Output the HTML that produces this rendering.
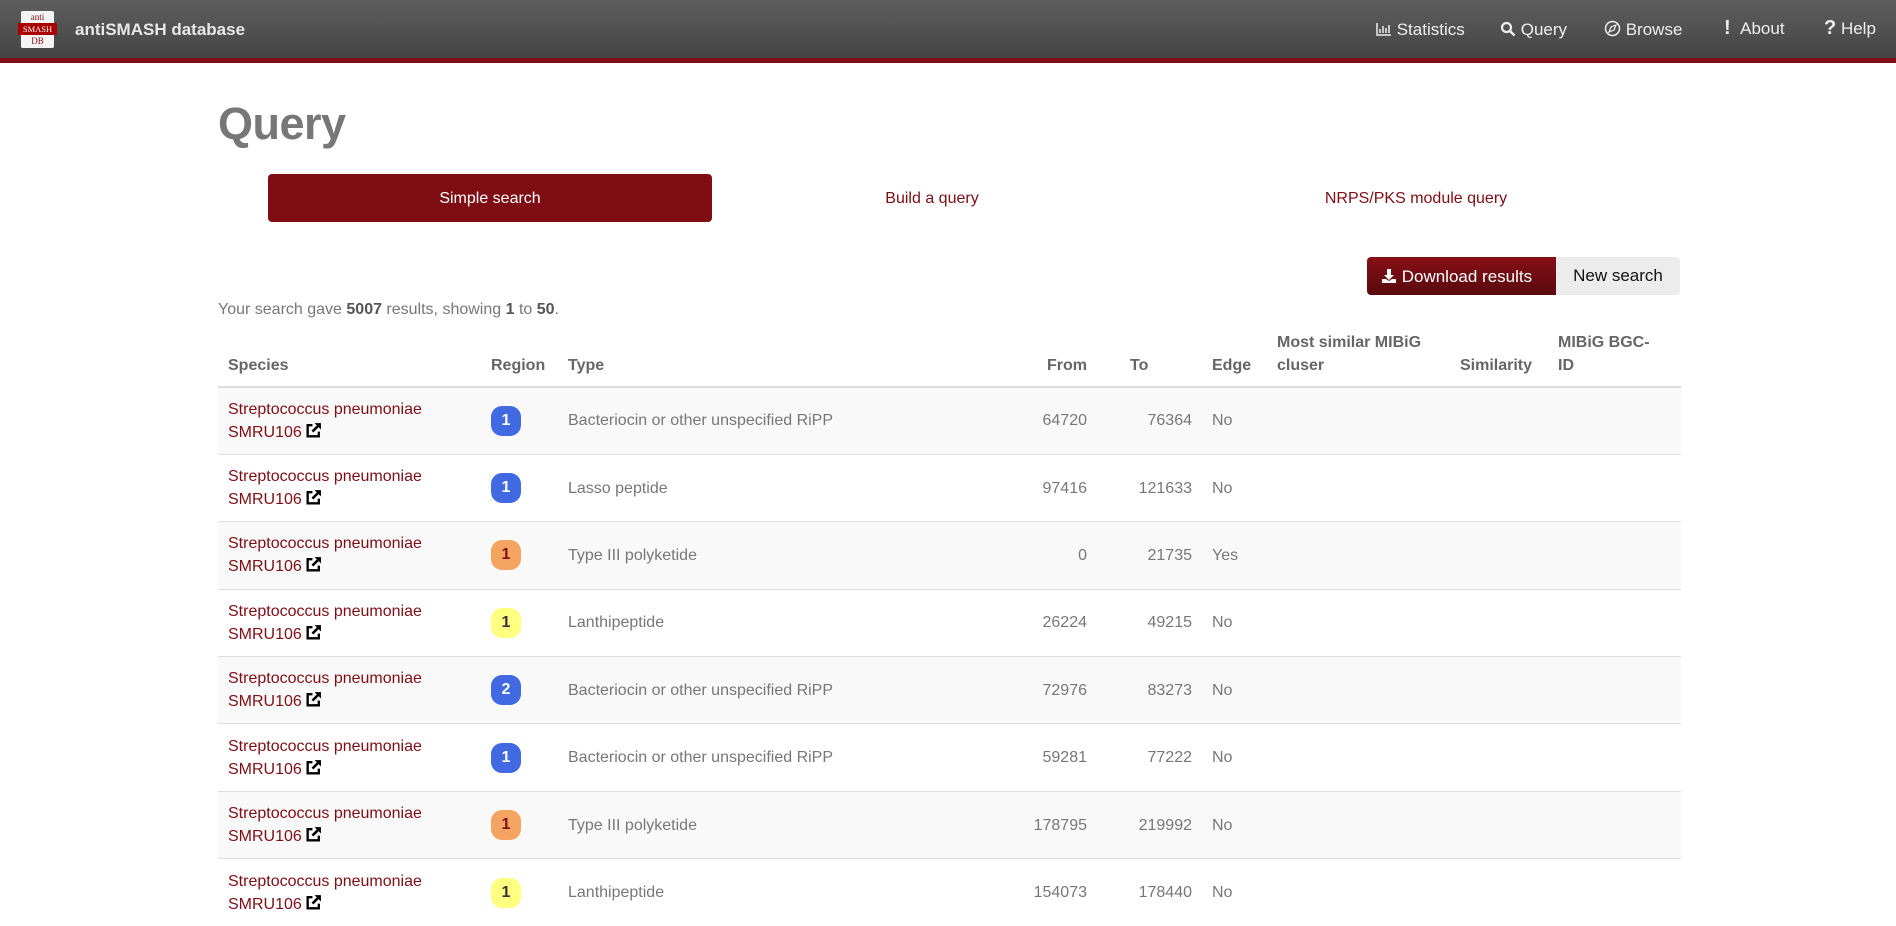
<!DOCTYPE html>
<html><head><meta charset="utf-8"><style>
*{box-sizing:border-box;margin:0;padding:0}
body{width:1896px;height:889px;overflow:hidden;background:#fff;font-family:"Liberation Sans",Arial,sans-serif;color:#777;position:relative}
.nav{position:absolute;left:0;top:0;width:1896px;height:63px;background:linear-gradient(#5e5e5e,#444);border-bottom:5px solid #7f0e14}
.logo{position:absolute;left:21px;top:11px;width:33px;height:37px;background:#f4f4f4;border-radius:2px;font-family:"Liberation Serif",serif;font-size:9px;color:#7f0e14;text-align:center;line-height:12px}
.logo .m{background:#a00;color:#fff;margin:0 -3px;font-size:8.5px}
.brand{position:absolute;left:75px;top:20px;color:#e8e8e8;font-weight:bold;font-size:17px}
.ni{position:absolute;top:20px;color:#eee;font-size:17px}
h1{position:absolute;left:218px;top:98px;font-size:45px;color:#777;font-weight:bold;font-family:"Liberation Sans",sans-serif;letter-spacing:-0.5px}
.tab{position:absolute;top:174px;height:48px;line-height:50px;font-size:16px;color:#7f0e14;text-align:center}
.tab.a{background:#7f0e14;color:#fff;border-radius:4px}
.dl{position:absolute;left:1367px;top:257px;width:189px;height:38px;background:linear-gradient(#860f15,#590a0e);border-radius:4px 0 0 4px;color:#fff;font-size:17px;line-height:40px;padding-left:14px}
.ns{position:absolute;left:1556px;top:257px;width:124px;height:38px;background:#ececec;border-radius:0 4px 4px 0;color:#111;font-size:17px;line-height:38px;text-align:center}
.res{position:absolute;left:218px;top:301px;font-size:16px}
.res b{color:#555}
table{position:absolute;left:218px;top:330px;width:1463px;border-collapse:collapse;table-layout:fixed;font-size:16px}
th{text-align:left;vertical-align:bottom;color:#666;font-weight:bold;padding:0 10px 9px;line-height:23px;border-bottom:2px solid #ddd;height:57px}
td{padding:0 10px;height:67.4px;border-top:1px solid #ddd;vertical-align:middle;line-height:23px}
tr:nth-child(odd) td{background:#f9f9f9}
.r{text-align:right}
a{color:#7f0e14;text-decoration:none}
.b{display:inline-block;width:30px;height:30px;border-radius:11px;text-align:center;line-height:30px;font-weight:bold;font-size:16px;color:#fff;background:#4169e1}
.o{background:#f4a460;color:#7f0e14}.y{background:#ffff80;color:#333}
.ex{vertical-align:-2px;margin-left:3px}
</style></head><body>
<svg width="0" height="0" style="position:absolute"><symbol id="ex" viewBox="0 0 16 16"><path d="M7 3H2.5v10.5H13V9" stroke="#000" stroke-width="2.2" fill="none"/><path d="M7 9l7-7" stroke="#000" stroke-width="2.4"/><path d="M9 1h6v6z" fill="#000"/></symbol></svg>
<div class="nav">
<div class="logo">anti<div class="m">SMASH</div>DB</div>
<div class="brand">antiSMASH database</div>
<div class="ni" style="left:1376px"><svg width="16" height="14" viewBox="0 0 16 14" style="vertical-align:-1px"><path d="M1 1v12h14" stroke="#eee" fill="none" stroke-width="1.5"/><path d="M4 11V7M7 11V4M10 11V6M13 11V3" stroke="#eee" stroke-width="1.5"/></svg> Statistics</div>
<div class="ni" style="left:1500px"><svg width="16" height="16" viewBox="0 0 16 16" style="vertical-align:-2px"><circle cx="6.5" cy="6.5" r="4.5" stroke="#eee" stroke-width="2.2" fill="none"/><path d="M10 10l4.5 4.5" stroke="#eee" stroke-width="2.6"/></svg> Query</div>
<div class="ni" style="left:1604px"><svg width="17" height="17" viewBox="0 0 17 17" style="vertical-align:-2px"><circle cx="8.5" cy="8.5" r="7" stroke="#eee" stroke-width="1.5" fill="none"/><path d="M12 5l-5 2-2 5 5-2z" stroke="#eee" stroke-width="1.2" fill="none"/></svg> Browse</div>
<div class="ni" style="left:1724px;font-size:20px;top:17px"><b>!</b><span style="font-size:17px">&nbsp;&nbsp;About</span></div>
<div class="ni" style="left:1824px;font-size:20px;top:17px"><b>?</b><span style="font-size:17px"> Help</span></div>
</div>
<h1>Query</h1>
<div class="tab a" style="left:268px;width:444px">Simple search</div>
<div class="tab" style="left:832px;width:200px">Build a query</div>
<div class="tab" style="left:1296px;width:240px">NRPS/PKS module query</div>
<div class="dl"><svg width="16" height="16" viewBox="0 0 16 16" style="vertical-align:-2px"><path d="M6 1h4v6h3l-5 5-5-5h3z" fill="#fff"/><path d="M1 11h4l3 2 3-2h4v4H1z" fill="#fff"/></svg> Download results</div>
<div class="ns">New search</div>
<div class="res">Your search gave <b>5007</b> results, showing <b>1</b> to <b>50</b>.</div>
<table>
<colgroup><col style="width:263px"><col style="width:77px"><col style="width:442px"><col style="width:97px"><col style="width:105px"><col style="width:65px"><col style="width:183px"><col style="width:98px"><col style="width:133px"></colgroup>
<thead><tr><th>Species</th><th>Region</th><th>Type</th><th class="r">From</th><th style="padding-left:33px">To</th><th>Edge</th><th>Most similar MIBiG<br>cluser</th><th>Similarity</th><th>MIBiG BGC-<br>ID</th></tr></thead>
<tbody>
<tr><td><a>Streptococcus pneumoniae SMRU106<svg class="ex" width="17" height="17"><use href="#ex"/></svg></a></td><td><span class="b">1</span></td><td>Bacteriocin or other unspecified RiPP</td><td class="r">64720</td><td class="r">76364</td><td>No</td><td></td><td></td><td></td></tr>
<tr><td><a>Streptococcus pneumoniae SMRU106<svg class="ex" width="17" height="17"><use href="#ex"/></svg></a></td><td><span class="b">1</span></td><td>Lasso peptide</td><td class="r">97416</td><td class="r">121633</td><td>No</td><td></td><td></td><td></td></tr>
<tr><td><a>Streptococcus pneumoniae SMRU106<svg class="ex" width="17" height="17"><use href="#ex"/></svg></a></td><td><span class="b o">1</span></td><td>Type III polyketide</td><td class="r">0</td><td class="r">21735</td><td>Yes</td><td></td><td></td><td></td></tr>
<tr><td><a>Streptococcus pneumoniae SMRU106<svg class="ex" width="17" height="17"><use href="#ex"/></svg></a></td><td><span class="b y">1</span></td><td>Lanthipeptide</td><td class="r">26224</td><td class="r">49215</td><td>No</td><td></td><td></td><td></td></tr>
<tr><td><a>Streptococcus pneumoniae SMRU106<svg class="ex" width="17" height="17"><use href="#ex"/></svg></a></td><td><span class="b">2</span></td><td>Bacteriocin or other unspecified RiPP</td><td class="r">72976</td><td class="r">83273</td><td>No</td><td></td><td></td><td></td></tr>
<tr><td><a>Streptococcus pneumoniae SMRU106<svg class="ex" width="17" height="17"><use href="#ex"/></svg></a></td><td><span class="b">1</span></td><td>Bacteriocin or other unspecified RiPP</td><td class="r">59281</td><td class="r">77222</td><td>No</td><td></td><td></td><td></td></tr>
<tr><td><a>Streptococcus pneumoniae SMRU106<svg class="ex" width="17" height="17"><use href="#ex"/></svg></a></td><td><span class="b o">1</span></td><td>Type III polyketide</td><td class="r">178795</td><td class="r">219992</td><td>No</td><td></td><td></td><td></td></tr>
<tr><td><a>Streptococcus pneumoniae SMRU106<svg class="ex" width="17" height="17"><use href="#ex"/></svg></a></td><td><span class="b y">1</span></td><td>Lanthipeptide</td><td class="r">154073</td><td class="r">178440</td><td>No</td><td></td><td></td><td></td></tr>
</tbody></table>
</body></html>
